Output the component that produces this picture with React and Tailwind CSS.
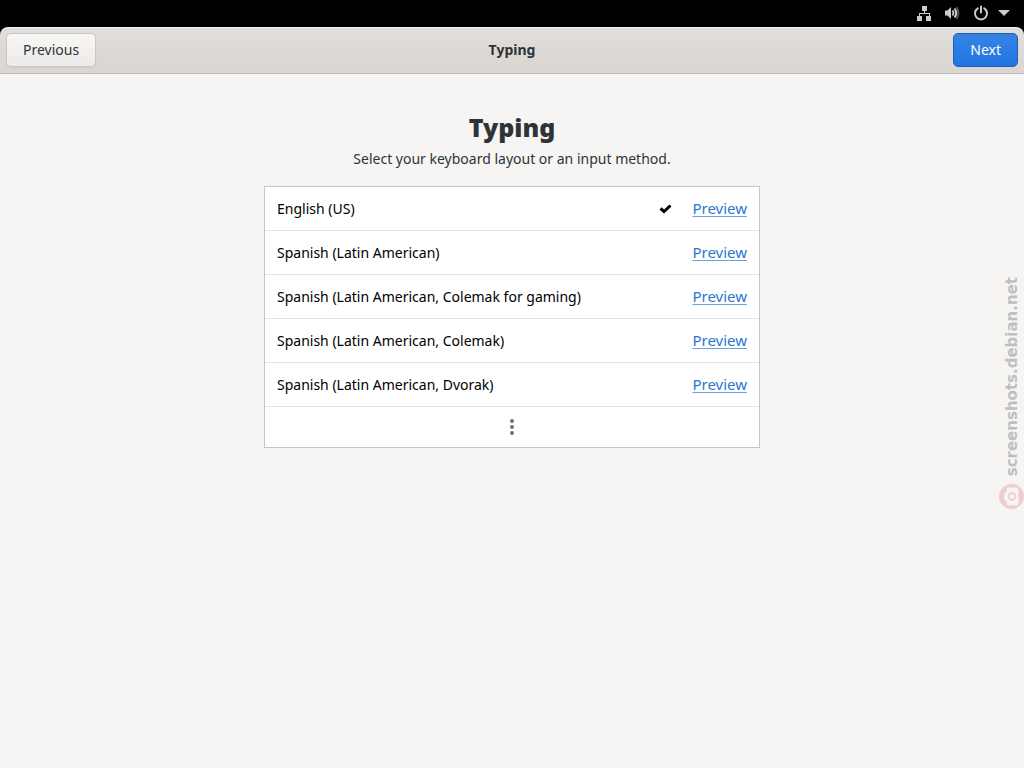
import React from 'react';

const layouts = [
  { id: 'us', name: 'English (US)' },
  { id: 'latam', name: 'Spanish (Latin American)' },
  { id: 'latam-colemak-gaming', name: 'Spanish (Latin American, Colemak for gaming)' },
  { id: 'latam-colemak', name: 'Spanish (Latin American, Colemak)' },
  { id: 'latam-dvorak', name: 'Spanish (Latin American, Dvorak)' },
];

const NetworkIcon = () => (
  <svg className="size-4" viewBox="0 0 16 16" fill="currentColor" aria-hidden="true">
    <path d="M7 1h5v5h-2v2h5v3h1v5h-5v-5h3V9H5v2h2v5H2v-5h2V8h5V6H7z" />
  </svg>
);

const VolumeIcon = () => (
  <svg className="size-4" viewBox="0 0 16 16" aria-hidden="true">
    <path d="M1 5.500h2.500L7 2v12L3.500 10.500H1z" fill="currentColor" />
    <path d="M8.500 5.500q2 2.500 0 5" fill="none" stroke="currentColor" strokeWidth="1.800" />
    <path d="M10.500 3.500q3.500 4.500 0 9" fill="none" stroke="currentColor" strokeWidth="2" />
    <path d="M12.500 2q4 6 0 12" fill="none" stroke="currentColor" strokeWidth="1.800" opacity="0.4" />
  </svg>
);

const PowerIcon = () => (
  <svg
    className="size-4"
    viewBox="0 0 16 16"
    fill="none"
    stroke="currentColor"
    strokeWidth="2"
    strokeLinecap="round"
    aria-hidden="true"
  >
    <path d="M8 1.500v6M4.800 3.300a6 6 0 1 0 6.400 0" />
  </svg>
);

const ArrowIcon = () => (
  <svg className="h-4 w-3" viewBox="0 0 12 16" fill="currentColor" aria-hidden="true">
    <path d="M0 5h12l-6 6z" />
  </svg>
);

const CheckIcon = () => (
  <svg className="size-4" viewBox="0 0 16 16" fill="none" stroke="black" strokeWidth="3" aria-label="Selected">
    <path d="M4.500 7.500l3.500 3L14.500 4.500" />
  </svg>
);

const TopBar = () => (
  <div className="flex h-[27px] items-center justify-end bg-black pr-[14px] pb-0.5 text-[#cccccc]">
    <div className="flex items-center gap-[13px]">
      <NetworkIcon />
      <VolumeIcon />
      <PowerIcon />
    </div>
    <div className="ml-[9px]">
      <ArrowIcon />
    </div>
  </div>
);

const HeaderBar = () => (
  <div className="bg-black">
    <header className="grid h-[47px] grid-cols-3 items-center rounded-t-lg border-t border-b border-t-[#f3f1f0] border-b-[#bfb8b1] bg-linear-to-b from-[#e1dedb] to-[#d9d5d1] px-1.5 pb-0.5">
      <button
        type="button"
        className="h-[34px] justify-self-start rounded-[5px] border border-[#cdc7c2] bg-linear-to-b from-[#f8f7f6] to-[#edebe9] px-4 shadow-xs"
      >
        Previous
      </button>
      <div className="text-center font-bold">Typing</div>
      <button
        type="button"
        className="h-[34px] justify-self-end rounded-[5px] border border-[#1b5fb8] bg-linear-to-b from-[#3584e4] to-[#1f76e1] px-4 text-white"
      >
        Next
      </button>
    </header>
  </div>
);

const LayoutRow = ({ layout, selected }) => (
  <li className="flex h-11 items-center border-b border-[#e4e4e4] px-3">
    <span className="flex-1 text-black">{layout.name}</span>
    {selected && <CheckIcon />}
    <a
      href={`#${layout.id}`}
      className="ml-5 text-[15px] text-[#2a76d0] underline decoration-[#6ba2e2] underline-offset-2"
    >
      Preview
    </a>
  </li>
);

const Watermark = () => (
  <div className="absolute right-0 bottom-[259px] flex w-[25px] flex-col items-center gap-2">
    <span className="rotate-180 font-['DejaVu_Sans',sans-serif] text-[15px] leading-5 font-bold text-[#bfbfbe] [writing-mode:vertical-rl]">
      screenshots.debian.net
    </span>
    <svg className="size-[25px]" viewBox="0 0 25 25" aria-hidden="true">
      <circle cx="12.500" cy="12.500" r="12.500" fill="#efcbd4" />
      <path
        d="M9.500 3.500h8q2 0 2 2v14q0 2-2 2h-8q-2 0-2-2V17L5 15.500v-6L7.500 8V5.500q0-2 2-2z"
        fill="#f6f5f4"
      />
      <circle cx="13" cy="12.500" r="3.300" fill="none" stroke="#efcbd4" strokeWidth="1.800" />
    </svg>
  </div>
);

export default function App() {
  return (
    <div className="relative flex min-h-screen flex-col bg-[#f6f5f4] font-['Noto_Sans',sans-serif] text-sm text-[#2e3436]">
      <TopBar />
      <HeaderBar />
      <main className="mx-auto w-full max-w-[496px] pt-[35px]">
        <h1 className="text-center text-[25px] leading-9 font-black">Typing</h1>
        <p className="mt-1 text-center leading-5">Select your keyboard layout or an input method.</p>
        <ul className="mt-[17px] border border-[#c9c5c0] bg-white">
          {layouts.map((layout, index) => (
            <LayoutRow key={layout.id} layout={layout} selected={index === 0} />
          ))}
          <li>
            <button type="button" aria-label="More" className="flex h-10 w-full items-center justify-center">
              <svg className="size-4" viewBox="0 0 16 16" fill="#727272" aria-hidden="true">
                <circle cx="8" cy="2" r="2" />
                <circle cx="8" cy="8" r="2" />
                <circle cx="8" cy="14" r="2" />
              </svg>
            </button>
          </li>
        </ul>
      </main>
      <Watermark />
    </div>
  );
}
